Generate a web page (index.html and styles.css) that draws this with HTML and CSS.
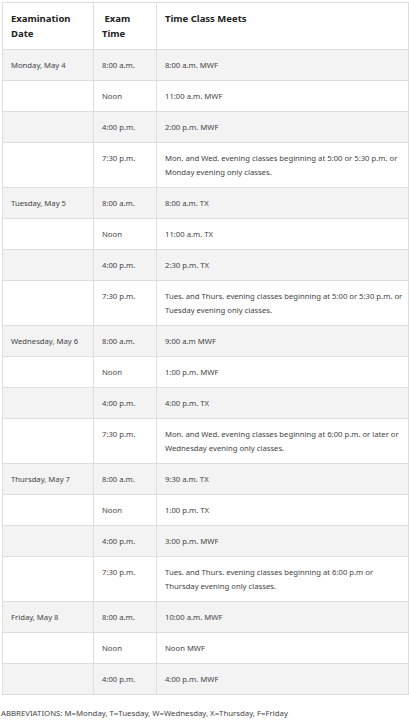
FILE: index.html
```html
<!DOCTYPE html>
<html lang="en">
<head>
<meta charset="utf-8">
<title>Final Examination Schedule</title>
<link rel="stylesheet" href="styles.css">
</head>
<body>
<table class="schedule">
  <colgroup>
    <col class="c-date">
    <col class="c-time">
    <col class="c-meets">
  </colgroup>
  <thead>
    <tr><th>Examination Date</th><th>&nbsp;Exam Time</th><th>Time Class Meets</th></tr>
  </thead>
  <tbody>
    <tr><td>Monday, May 4</td><td>8:00 a.m.</td><td>8:00 a.m. MWF</td></tr>
    <tr><td></td><td>Noon</td><td>11:00 a.m. MWF</td></tr>
    <tr><td></td><td>4:00 p.m.</td><td>2:00 p.m. MWF</td></tr>
    <tr><td></td><td>7:30 p.m.</td><td>Mon. and Wed. evening classes beginning at 5:00 or 5:30 p.m. or Monday evening only classes.</td></tr>
    <tr><td>Tuesday, May 5</td><td>8:00 a.m.</td><td>8:00 a.m. TX</td></tr>
    <tr><td></td><td>Noon</td><td>11:00 a.m. TX</td></tr>
    <tr><td></td><td>4:00 p.m.</td><td>2:30 p.m. TX</td></tr>
    <tr><td></td><td>7:30 p.m.</td><td>Tues. and Thurs. evening classes beginning at 5:00 or 5:30 p.m. or Tuesday evening only classes.</td></tr>
    <tr><td>Wednesday, May 6</td><td>8:00 a.m.</td><td>9:00 a.m MWF</td></tr>
    <tr><td></td><td>Noon</td><td>1:00 p.m. MWF</td></tr>
    <tr><td></td><td>4:00 p.m.</td><td>4:00 p.m. TX</td></tr>
    <tr><td></td><td>7:30 p.m.</td><td>Mon. and Wed. evening classes beginning at 6:00 p.m. or later or Wednesday evening only classes.</td></tr>
    <tr><td>Thursday, May 7</td><td>8:00 a.m.</td><td>9:30 a.m. TX</td></tr>
    <tr><td></td><td>Noon</td><td>1:00 p.m. TX</td></tr>
    <tr><td></td><td>4:00 p.m.</td><td>3:00 p.m. MWF</td></tr>
    <tr><td></td><td>7:30 p.m.</td><td>Tues. and Thurs. evening classes beginning at 6:00 p.m or Thursday evening only classes.</td></tr>
    <tr><td>Friday, May 8</td><td>8:00 a.m.</td><td>10:00 a.m. MWF</td></tr>
    <tr><td></td><td>Noon</td><td>Noon MWF</td></tr>
    <tr><td></td><td>4:00 p.m.</td><td>4:00 p.m. MWF</td></tr>
  </tbody>
</table>
<p class="abbr">ABBREVIATIONS: M=Monday, T=Tuesday, W=Wednesday, X=Thursday, F=Friday</p>
</body>
</html>
```
FILE: styles.css
```css
html, body {
  margin: 0;
  padding: 0;
  background: #ffffff;
}
body {
  padding: 2px 1px 0 2px;
  font-family: "Noto Sans", "Open Sans", sans-serif;
  color: #444444;
}
.schedule {
  width: 406px;
  border-collapse: collapse;
  table-layout: fixed;
}
.c-date { width: 91px; }
.c-time { width: 63px; }
.c-meets { width: 252px; }
.schedule th,
.schedule td {
  border: 1px solid #dedede;
  text-align: left;
  vertical-align: top;
  padding: 8px;
}
.schedule th {
  font-size: 9.5px;
  line-height: 15px;
  font-weight: 700;
  color: #222222;
}
.schedule td {
  font-size: 7.7px;
  line-height: 14px;
}
.schedule td.wide,
.schedule td:last-child {
  padding-right: 5px;
}
.schedule tbody tr:nth-child(odd) td {
  background: #f3f3f3;
}
.abbr {
  margin: 12px 0 0 -1px;
  font-size: 7.8px;
  line-height: 12px;
  color: #444444;
}
```
